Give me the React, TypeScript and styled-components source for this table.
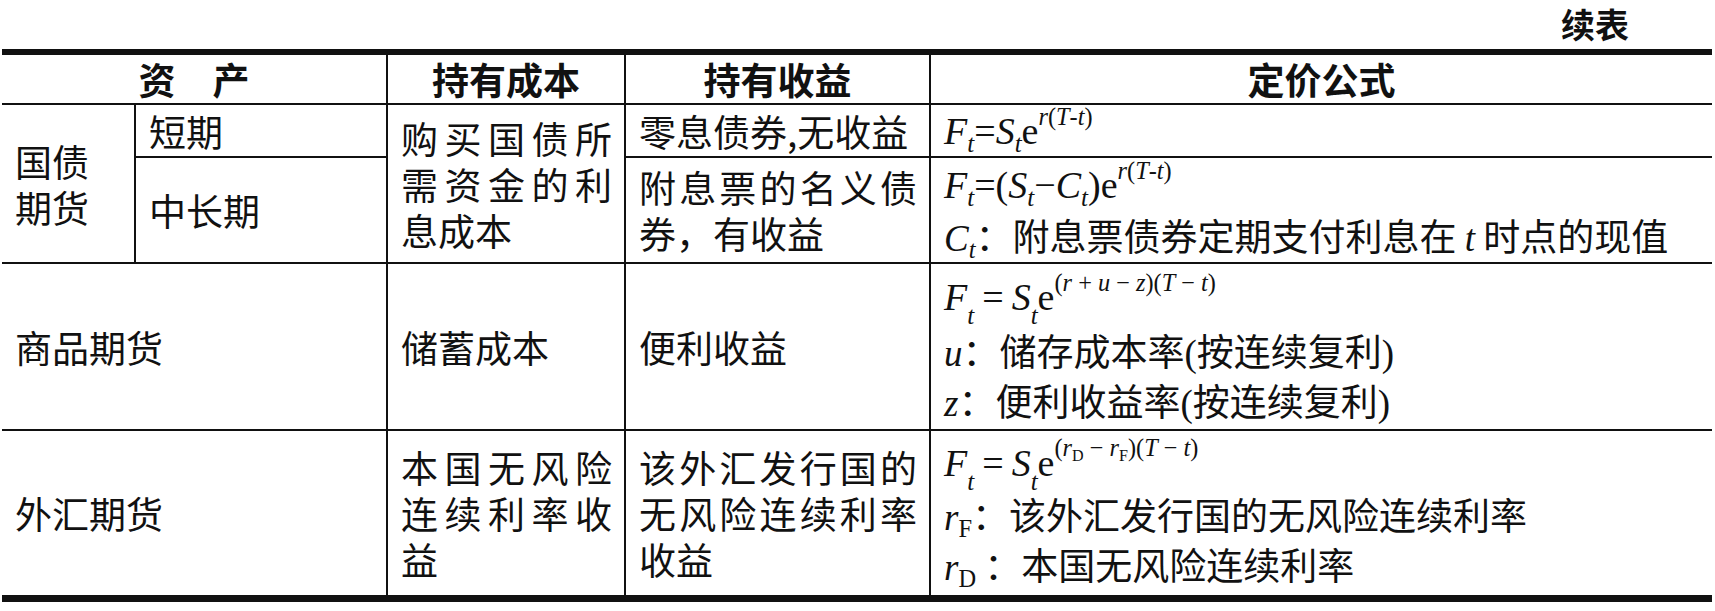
import React from 'react'
import styled, { createGlobalStyle } from 'styled-components'

const GlobalStyle = createGlobalStyle`
  html, body {
    margin: 0;
    padding: 0;
    background: #fff;
  }
  body {
    font-family: "Noto Sans CJK SC", "Noto Sans", sans-serif;
    color: #111;
  }
`

const Page = styled.div`
  width: 1715px;
  height: 611px;
  overflow: hidden;
`

const Caption = styled.div`
  height: 49px;
  padding-right: 86px;
  text-align: right;
  font-size: 34px;
  font-weight: 700;
  line-height: 48px;
`

const Table = styled.table`
  margin-left: 2px;
  width: 1710px;
  border-collapse: collapse;
  table-layout: fixed;
  border-top: 6px solid #111;
  border-bottom: 7px solid #111;
  border-left: hidden;
  border-right: hidden;
  font-size: 37px;
  line-height: 46px;
`

const Row = styled.tr<{ $h: number }>`
  height: ${props => props.$h}px;
`

const HeadCell = styled.th`
  border: 2px solid #111;
  padding: 0 12px;
  font-weight: 700;
  text-align: center;
  vertical-align: middle;
`

const Cell = styled.td`
  border: 2px solid #111;
  padding: 0 12px 0 13px;
  font-weight: 400;
  text-align: left;
  vertical-align: middle;
  white-space: nowrap;
`

const Line = styled.div<{ $spread?: boolean }>`
  text-align: ${props => (props.$spread ? 'justify' : 'left')};
  text-align-last: ${props => (props.$spread ? 'justify' : 'left')};
`

const Formula = styled.div<{ $h?: number }>`
  font-family: "Liberation Serif", "Times New Roman", serif;
  font-size: 38px;
  line-height: ${props => props.$h ?? 46}px;
`

const Var = styled.i`
  font-family: "Liberation Serif", "Times New Roman", serif;
  font-style: italic;
`

const Up = styled.span`
  font-family: "Liberation Serif", "Times New Roman", serif;
  font-style: normal;
`

const Sub = styled.sub<{ $low?: boolean }>`
  font-size: 0.66em;
  line-height: 0;
  vertical-align: ${props => (props.$low ? '-0.55em' : '-0.3em')};
`

const Sup = styled.sup`
  font-size: 0.64em;
  line-height: 0;
  vertical-align: 0.8em;
`

const Gap = styled.span<{ $w: number }>`
  display: inline-block;
  width: ${props => props.$w}px;
`

const Note = styled.div`
  line-height: 46px;
`

const App = () => {
  return (
    <Page lang="zh-CN">
      <GlobalStyle />
      <Caption>续表</Caption>
      <Table>
        <colgroup>
          <col style={{ width: 133 }} />
          <col style={{ width: 252 }} />
          <col style={{ width: 238 }} />
          <col style={{ width: 305 }} />
          <col style={{ width: 782 }} />
        </colgroup>
        <tbody>
          <Row $h={52}>
            <HeadCell colSpan={2}>资　产</HeadCell>
            <HeadCell>持有成本</HeadCell>
            <HeadCell>持有收益</HeadCell>
            <HeadCell>定价公式</HeadCell>
          </Row>
          <Row $h={53}>
            <Cell rowSpan={2}>
              <Line>国债</Line>
              <Line>期货</Line>
            </Cell>
            <Cell>短期</Cell>
            <Cell rowSpan={2}>
              <Line $spread>购买国债所</Line>
              <Line $spread>需资金的利</Line>
              <Line>息成本</Line>
            </Cell>
            <Cell>零息债券,无收益</Cell>
            <Cell>
              <Formula>
                <Var>F</Var><Sub><Var>t</Var></Sub>=<Var>S</Var><Sub><Var>t</Var></Sub>e
                <Sup><Var>r</Var>(<Var>T</Var>-<Var>t</Var>)</Sup>
              </Formula>
            </Cell>
          </Row>
          <Row $h={105}>
            <Cell>中长期</Cell>
            <Cell>
              <Line $spread>附息票的名义债</Line>
              <Line>券，有收益</Line>
            </Cell>
            <Cell>
              <Formula $h={54}>
                <Var>F</Var><Sub><Var>t</Var></Sub>=(<Var>S</Var><Sub><Var>t</Var></Sub>−<Var>C</Var><Sub><Var>t</Var></Sub>)e
                <Sup><Var>r</Var>(<Var>T</Var>-<Var>t</Var>)</Sup>
              </Formula>
              <Note>
                <Var>C</Var><Sub><Var>t</Var></Sub>：附息票债券定期支付利息在 <Var>t</Var> 时点的现值
              </Note>
            </Cell>
          </Row>
          <Row $h={167}>
            <Cell colSpan={2}>商品期货</Cell>
            <Cell>储蓄成本</Cell>
            <Cell>便利收益</Cell>
            <Cell>
              <Formula $h={60}>
                <Var>F</Var><Sub $low><Var>t</Var></Sub>
                <Gap $w={8} />=<Gap $w={8} />
                <Var>S</Var><Sub $low><Var>t</Var></Sub>e
                <Sup>
                  (<Var>r</Var> + <Var>u</Var> − <Var>z</Var>)(<Var>T</Var> − <Var>t</Var>)
                </Sup>
              </Formula>
              <Note>
                <Var>u</Var>：储存成本率<Up>(</Up>按连续复利<Up>)</Up>
              </Note>
              <Note>
                <Var>z</Var>：便利收益率<Up>(</Up>按连续复利<Up>)</Up>
              </Note>
            </Cell>
          </Row>
          <Row $h={168}>
            <Cell colSpan={2}>外汇期货</Cell>
            <Cell>
              <Line $spread>本国无风险</Line>
              <Line $spread>连续利率收</Line>
              <Line>益</Line>
            </Cell>
            <Cell>
              <Line $spread>该外汇发行国的</Line>
              <Line $spread>无风险连续利率</Line>
              <Line>收益</Line>
            </Cell>
            <Cell>
              <Formula $h={56}>
                <Var>F</Var><Sub $low><Var>t</Var></Sub>
                <Gap $w={8} />=<Gap $w={8} />
                <Var>S</Var><Sub $low><Var>t</Var></Sub>e
                <Sup>
                  (<Var>r</Var><Sub><Up>D</Up></Sub> − <Var>r</Var><Sub><Up>F</Up></Sub>)(<Var>T</Var> − <Var>t</Var>)
                </Sup>
              </Formula>
              <Note>
                <Var>r</Var><Sub><Up>F</Up></Sub>：该外汇发行国的无风险连续利率
              </Note>
              <Note>
                <Var>r</Var><Sub><Up>D</Up></Sub> ：本国无风险连续利率
              </Note>
            </Cell>
          </Row>
        </tbody>
      </Table>
    </Page>
  )
}

export default App
